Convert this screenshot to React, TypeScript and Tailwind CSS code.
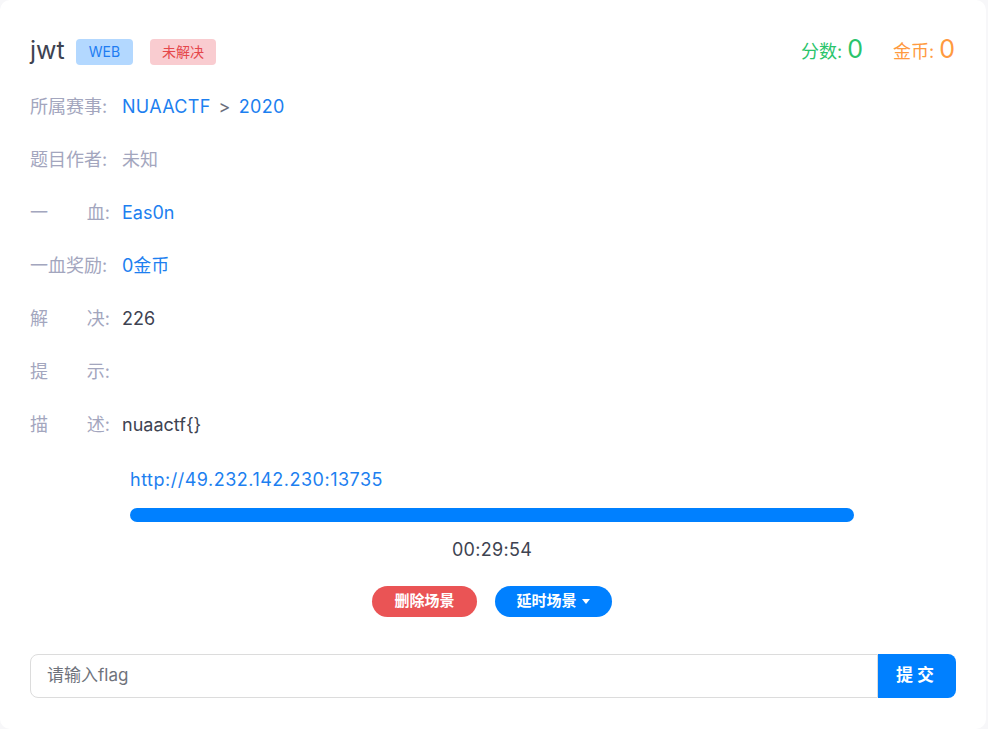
const rows = [
  { label: "所属赛事", value: "NUAACTF > 2020", tone: "link" },
  { label: "题目作者", value: "未知", tone: "muted" },
  { label: "一血", value: "Eas0n", tone: "link" },
  { label: "一血奖励", value: "0金币", tone: "link" },
  { label: "解决", value: "226", tone: "text" },
  { label: "提示", value: "", tone: "text" },
  { label: "描述", value: "nuaactf{}", tone: "text" },
];

function Label({ text }: { text: string }) {
  // 两字标签两端对齐
  if (text.length === 2) {
    return (
      <span className="flex w-[80px] justify-between text-[#a3a6be]">
        <span>{text[0]}</span>
        <span>{text[1]}:</span>
      </span>
    );
  }
  return <span className="w-[80px] whitespace-nowrap text-[#a3a6be]">{text}:</span>;
}

export default function App() {
  return (
    <div className="min-h-screen bg-[#f7f7f9] pr-[2px] font-['Inter','Noto_Sans_CJK_SC',sans-serif]">
      <div className="h-[729px] rounded-[10px] bg-white px-[30px] pt-[31px]">
        <div className="flex items-center justify-between">
          <div className="flex items-center">
            <h1 className="text-[25px] leading-[32px] text-[#3e4351]">jwt</h1>
            <span className="ml-[11px] mt-[4px] rounded-[4px] bg-[#b3d8ff] px-[13px] py-[4px] text-[14px] leading-[18px] text-[#1e7cf2]">WEB</span>
            <span className="ml-[17px] mt-[4px] rounded-[4px] bg-[#f9ccd0] px-[12px] py-[4px] text-[14px] leading-[18px] text-[#e5474b]">未解决</span>
          </div>
          <div className="flex items-baseline gap-[30px] pr-[1px]">
            <span className="text-[18px] text-[#2ac46b]">
              分数: <span className="text-[25px]">0</span>
            </span>
            <span className="text-[18px] text-[#ff9a3f]">
              金币: <span className="text-[25px]">0</span>
            </span>
          </div>
        </div>

        <div className="mt-[26px] flex flex-col gap-[29px] text-[18px] leading-[24px]">
          {rows.map((r) => (
            <div key={r.label} className="flex">
              <Label text={r.label} />
              <span
                className={
                  "ml-[12px] " +
                  (r.tone === "link"
                    ? "text-[#1d7ff0]"
                    : r.tone === "muted"
                    ? "text-[#a3a6be]"
                    : "text-[#3e4351]")
                }
              >
                {r.label === "所属赛事" ? (
                  <span className="tracking-[0.3px]">
                    NUAACTF<span className="mx-[8px] text-[#6b6f7c]">&gt;</span>2020
                  </span>
                ) : (
                  r.value
                )}
              </span>
            </div>
          ))}
        </div>

        <div className="ml-[100px] mr-[102px] mt-[31px]">
          <div className="text-[18px] leading-[24px] tracking-[0.5px] text-[#1d7ff0]">http://49.232.142.230:13735</div>
          <div className="mt-[16px] h-[14px] rounded-full bg-[#0080ff]" />
          <div className="mt-[16px] text-center text-[18px] leading-[24px] tracking-[0.3px] text-[#3e4351]">00:29:54</div>
          <div className="mt-[24px] flex justify-center gap-[18px]">
            <button className="h-[31px] rounded-full bg-[#ea5455] px-[22px] text-[15px] font-bold text-white">删除场景</button>
            <button className="flex h-[31px] items-center gap-[5px] rounded-full bg-[#0080ff] px-[22px] text-[15px] font-bold text-white">
              延时场景
              <svg width="8" height="5" viewBox="0 0 8 5">
                <path d="M0 0h8L4 5z" fill="white" />
              </svg>
            </button>
          </div>
        </div>

        <div className="mt-[37px] flex h-[44px]">
          <input
            placeholder="请输入flag"
            className="flex-1 rounded-l-[8px] border border-[#dcdcdc] px-[16px] text-[17px] text-[#3e4351] outline-none placeholder:text-[#6f737c]"
          />
          <button className="w-[78px] rounded-r-[8px] bg-[#0080ff] text-[17px] font-bold tracking-[4px] text-white">提交</button>
        </div>
      </div>
    </div>
  );
}
